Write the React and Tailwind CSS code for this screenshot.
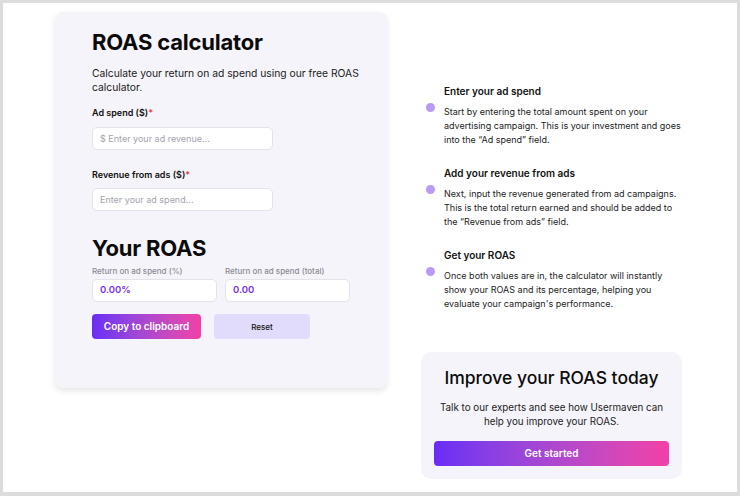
import React from "react";

function Step({ title, children }) {
  return (
    <div className="flex items-start">
      <div className="mt-[19px] ml-[5px] h-[9px] w-[9px] shrink-0 rounded-full bg-[#b99af6]" />
      <div className="ml-[9px] w-[240px]">
        <div className="text-[10px] font-semibold leading-[14px] text-[#111]">{title}</div>
        <p className="mt-[7px] text-[9px] leading-[14px] text-[#222]">{children}</p>
      </div>
    </div>
  );
}

export default function App() {
  return (
    <div
      className="h-[496px] w-[740px] overflow-hidden border-[3px] border-b-[4px] border-[#dcdcdc] bg-white"
      style={{ fontFamily: "Inter, 'Noto Sans', sans-serif" }}
    >
      <div className="flex pl-[52px] pt-[9px]">
        {/* Left card */}
        <div className="h-[376px] w-[332px] shrink-0 rounded-[8px] bg-[#f5f4fa] pl-[37px] pt-[15px] shadow-[0_3px_6px_rgba(0,0,0,0.1)]">
          <h1 className="text-[22px] font-bold leading-[30px] tracking-[-0.2px] text-[#0b0b0b]">ROAS calculator</h1>
          <p className="mt-[9px] w-[280px] text-[10.3px] leading-[14px] text-[#1b1b1b]">
            Calculate your return on ad spend using our free ROAS calculator.
          </p>
          <label className="mt-[13px] block text-[9px] font-semibold leading-[12px] text-[#111]">
            Ad spend ($)<span className="text-[#ef3b3b]">*</span>
          </label>
          <div className="mt-[8px] flex h-[23px] w-[181px] items-center rounded-[5px] border border-[#e2e2ea] bg-white px-[7px] text-[9px] text-[#a3a3ad]">
            $ Enter your ad revenue...
          </div>
          <label className="mt-[19px] block text-[9px] font-semibold leading-[12px] text-[#111]">
            Revenue from ads ($)<span className="text-[#ef3b3b]">*</span>
          </label>
          <div className="mt-[7px] flex h-[23px] w-[181px] items-center rounded-[5px] border border-[#e2e2ea] bg-white px-[7px] text-[9px] text-[#a3a3ad]">
            Enter your ad spend...
          </div>
          <h2 className="mt-[24px] text-[22px] font-bold leading-[26px] tracking-[-0.2px] text-[#0b0b0b]">Your ROAS</h2>
          <div className="mt-[4px] flex gap-[8px]">
            <div className="w-[125px]">
              <div className="text-[8px] font-medium leading-[12px] text-[#8a8a96]">Return on ad spend (%)</div>
              <div className="mt-[2px] flex h-[23px] items-center rounded-[5px] border border-[#e2e2ea] bg-white px-[7px] text-[9.5px] font-semibold text-[#7b2ff2]">
                0.00%
              </div>
            </div>
            <div className="w-[125px]">
              <div className="text-[8px] font-medium leading-[12px] text-[#8a8a96]">Return on ad spend (total)</div>
              <div className="mt-[2px] flex h-[23px] items-center rounded-[5px] border border-[#e2e2ea] bg-white px-[7px] text-[9.5px] font-semibold text-[#7b2ff2]">
                0.00
              </div>
            </div>
          </div>
          <div className="mt-[12px] flex gap-[13px]">
            <button className="flex h-[25px] w-[109px] items-center justify-center rounded-[4px] bg-gradient-to-r from-[#6a2cf5] to-[#f23fa6] text-[10px] font-semibold text-white">
              Copy to clipboard
            </button>
            <button className="flex h-[25px] w-[96px] items-center justify-center rounded-[4px] bg-[#e1dbfc] text-[8px] font-medium text-[#111]">
              Reset
            </button>
          </div>
        </div>

        {/* Right column */}
        <div className="ml-[34px] w-[261px] shrink-0 pt-[72px]">
          <div className="flex flex-col gap-[19px]">
            <Step title="Enter your ad spend">
              Start by entering the total amount spent on your advertising campaign. This is your investment and goes into the “Ad spend” field.
            </Step>
            <Step title="Add your revenue from ads">
              Next, input the revenue generated from ad campaigns. This is the total return earned and should be added to the “Revenue from ads” field.
            </Step>
            <Step title="Get your ROAS">
              Once both values are in, the calculator will instantly show your ROAS and its percentage, helping you evaluate your campaign's performance.
            </Step>
          </div>
          <div className="mt-[41px] flex h-[127px] flex-col items-center rounded-[10px] bg-[#f5f4fa] px-[13px] pt-[14px]">
            <div className="text-[17.5px] font-medium leading-[24px] text-[#0b0b0b]">Improve your ROAS today</div>
            <p className="mt-[11px] text-center text-[9.8px] leading-[14px] text-[#222]">
              Talk to our experts and see how Usermaven can
              <br />
              help you improve your ROAS.
            </p>
            <button className="mt-[12px] flex h-[25px] w-full items-center justify-center rounded-[4px] bg-gradient-to-r from-[#6a2cf5] to-[#f23fa6] text-[10px] font-semibold text-white">
              Get started
            </button>
          </div>
        </div>
      </div>
    </div>
  );
}
